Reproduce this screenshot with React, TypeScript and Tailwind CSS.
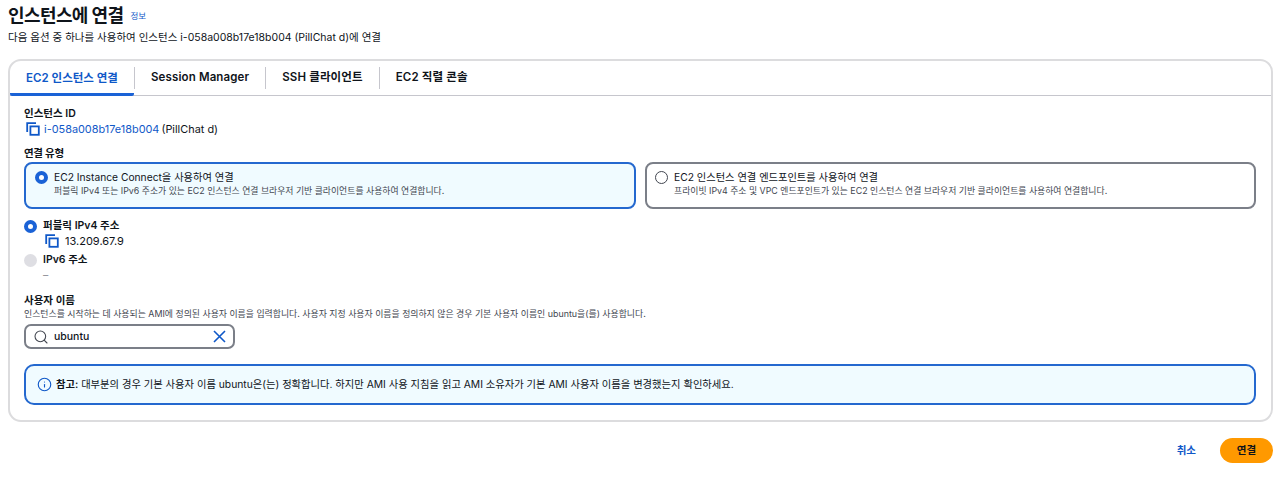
import { Search, Info } from "lucide-react";

const font = { fontFamily: '"Inter", "Noto Sans CJK KR", sans-serif' };

const tabs = ["Session Manager", "SSH 클라이언트", "EC2 직렬 콘솔"];

function CopyIcon() {
  return (
    <svg width="14" height="14" viewBox="0 0 14 14" fill="none" stroke="#0f58c8" strokeWidth="1.8" className="shrink-0">
      <rect x="4.4" y="4.4" width="8.4" height="8.4" />
      <path d="M1.2 10V1.2H10" />
    </svg>
  );
}

function Radio({ kind }: { kind: "on" | "off" | "disabled" }) {
  if (kind === "on") {
    return <span className="h-[13px] w-[13px] shrink-0 rounded-full border-[4px] border-[#1a62d6] bg-white" />;
  }
  if (kind === "disabled") {
    return <span className="h-[13px] w-[13px] shrink-0 rounded-full bg-[#dedee3]" />;
  }
  return <span className="h-[13px] w-[13px] shrink-0 rounded-full border border-[#424650] bg-white" />;
}

export default function App() {
  return (
    <div className="h-[478px] w-[1280px] overflow-hidden bg-white pr-[7px] pl-2 text-[#0f141a]" style={font}>
      <div className="flex h-[31px] items-center">
        <h1 className="text-[18px] leading-[24px] font-bold tracking-[-0.6px]">인스턴스에 연결</h1>
        <a className="mt-[1px] ml-[7px] text-[8.5px] text-[#0f58c8]">정보</a>
      </div>
      <p className="h-[28px] text-[10.5px] leading-[14px]">
        다음 옵션 중 하나를 사용하여 인스턴스 i-058a008b17e18b004 (PillChat d)에 연결
      </p>

      {/* connect panel */}
      <section className="h-[363px] rounded-[13px] border-2 border-[#dcdcde]">
        <div className="flex h-[35px] border-b border-[#c6c6cd]">
          <div className="-mb-px flex h-[35px] w-[124px] items-center justify-center rounded-b-[2px] border-b-[3px] border-[#1a62d6] pt-[3px] text-[11.5px] font-semibold text-[#0f58c8]">
            EC2 인스턴스 연결
          </div>
          {tabs.map((tab) => (
            <div key={tab} className="flex h-[34px] items-center">
              <span className="flex h-[22px] items-center border-l border-[#c6c6cd] px-[16px] text-[11.5px] font-semibold tracking-[0.13px]">
                {tab}
              </span>
            </div>
          ))}
        </div>

        <div className="px-[14px] pt-[11px]">
          <p className="text-[10.5px] leading-[14px] font-semibold">인스턴스 ID</p>
          <div className="flex h-[16px] items-center pl-[2px] text-[10.9px]">
            <CopyIcon />
            <a className="ml-[4px] text-[#0f58c8]">i-058a008b17e18b004</a>
            <span className="ml-[2px]">(PillChat d)</span>
          </div>

          <p className="mt-[10px] text-[10.5px] leading-[14px] font-semibold tracking-[-0.3px]">연결 유형</p>
          <div className="mt-[1px] grid grid-cols-[612px_611px] gap-[9px]">
            <div className="flex h-[47px] rounded-[8px] border-2 border-[#2468cf] bg-[#f0fbff] pt-[6px] pl-[9px]">
              <span className="mt-[1px] flex"><Radio kind="on" /></span>
              <div className="ml-[6px]">
                <p className="text-[10.25px] leading-[14px]">EC2 Instance Connect을 사용하여 연결</p>
                <p className="text-[8.85px] leading-[14px] text-[#424650]">
                  퍼블릭 IPv4 또는 IPv6 주소가 있는 EC2 인스턴스 연결 브라우저 기반 클라이언트를 사용하여 연결합니다.
                </p>
              </div>
            </div>
            <div className="flex h-[47px] rounded-[8px] border-2 border-[#7b7f88] bg-white pt-[6px] pl-[8px]">
              <span className="mt-[1px] flex"><Radio kind="off" /></span>
              <div className="ml-[6px]">
                <p className="text-[10.25px] leading-[14px]">EC2 인스턴스 연결 엔드포인트를 사용하여 연결</p>
                <p className="text-[8.85px] leading-[14px] text-[#424650]">
                  프라이빗 IPv4 주소 및 VPC 엔드포인트가 있는 EC2 인스턴스 연결 브라우저 기반 클라이언트를 사용하여 연결합니다.
                </p>
              </div>
            </div>
          </div>

          <div className="mt-[10px] flex h-[14px] items-center gap-[6px]">
            <Radio kind="on" />
            <span className="text-[10.5px] font-semibold">퍼블릭 IPv4 주소</span>
          </div>
          <div className="flex h-[16px] items-center pl-[21px] text-[11px]">
            <CopyIcon />
            <span className="ml-[6px]">13.209.67.9</span>
          </div>
          <div className="mt-[4px] flex h-[14px] items-center gap-[6px]">
            <Radio kind="disabled" />
            <span className="text-[10.5px] font-semibold">IPv6 주소</span>
          </div>
          <p className="mt-[2px] h-[14px] pl-[19px] text-[10.5px] leading-[14px] text-[#8c8c94]">–</p>

          <p className="mt-[12px] text-[10.5px] leading-[12px] font-semibold">사용자 이름</p>
          <p className="text-[8.9px] leading-[13px] text-[#424650]">
            인스턴스를 시작하는 데 사용되는 AMI에 정의된 사용자 이름을 입력합니다. 사용자 지정 사용자 이름을 정의하지 않은 경우 기본 사용자 이름인 ubuntu을(를) 사용합니다.
          </p>
          <div className="mt-[4px] flex h-[25px] w-[211px] items-center rounded-[7px] border-2 border-[#7b7f88] pr-[7px] pl-[7px]">
            <Search size={16} strokeWidth={1.6} className="text-[#424650]" />
            <span className="ml-[5px] flex-1 text-[10.5px] font-medium">ubuntu</span>
            <svg width="13" height="13" viewBox="0 0 13 13" fill="none" stroke="#0f58c8" strokeWidth="1.6" className="shrink-0">
              <path d="M1 1l11 11M12 1L1 12" />
            </svg>
          </div>

          <div className="mt-[15px] flex h-[41px] w-[1232px] items-center rounded-[10px] border-2 border-[#2468cf] bg-[#f0fbff] pl-[11px] text-[10.3px]">
            <Info size={15} strokeWidth={1.8} className="text-[#0f58c8]" />
            <p className="ml-[4px]">
              <b className="font-semibold">참고:</b> 대부분의 경우 기본 사용자 이름 ubuntu은(는) 정확합니다. 하지만 AMI 사용 지침을 읽고 AMI 소유자가 기본 AMI 사용자 이름을 변경했는지 확인하세요.
            </p>
          </div>
        </div>
      </section>

      <div className="mt-[16px] flex items-center justify-end">
        <a className="mr-[24px] text-[10.5px] font-semibold text-[#0f58c8]">취소</a>
        <button className="h-[25px] w-[53px] rounded-full bg-[#ff9900] text-[10.5px] font-semibold">연결</button>
      </div>
    </div>
  );
}
